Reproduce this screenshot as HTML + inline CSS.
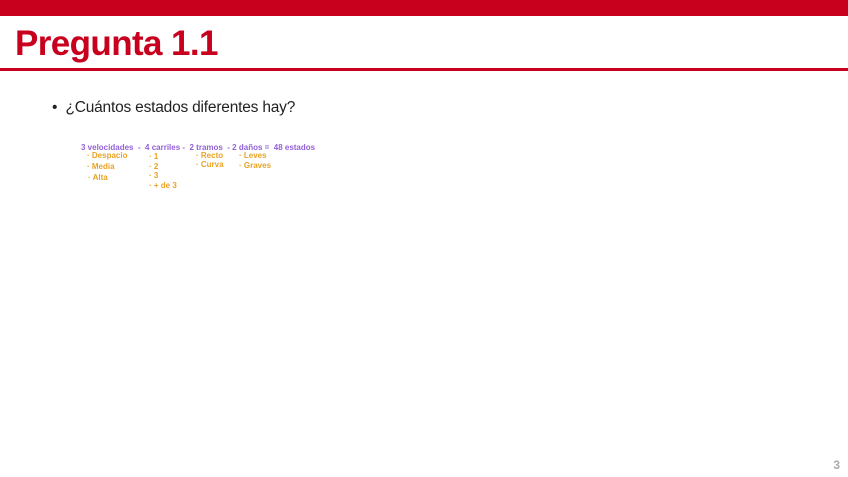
<!DOCTYPE html>
<html><head><style>
body{margin:0;width:848px;height:477px;background:#fff;position:relative;overflow:hidden;font-family:"Liberation Sans",sans-serif}
.bar{position:absolute;left:0;top:0;width:848px;height:16px;background:#c8001e}
.line{position:absolute;left:0;top:68px;width:848px;height:3px;background:#c8001e}
h1{position:absolute;left:15px;top:24px;margin:0;font-size:35px;font-weight:bold;color:#c8001e;letter-spacing:-0.6px}
.b{position:absolute;left:52px;top:99px;font-size:15.5px;color:#222;letter-spacing:-0.2px}
.t{position:absolute;font-size:8px;font-weight:bold;white-space:nowrap}
.p{color:#9361d8}.o{color:#e9a326}
.n{position:absolute;right:8px;top:458px;font-size:12px;font-weight:bold;color:#aaa}
</style></head><body>
<div class="bar"></div>
<h1>Pregunta 1.1</h1>
<div class="line"></div>
<div class="b">•&nbsp;&nbsp;¿Cuántos estados diferentes hay?</div>
<div class="t p" style="left:81px;top:143px">3 velocidades &nbsp;- &nbsp;4 carriles - &nbsp;2 tramos &nbsp;- 2 daños = &nbsp;48 estados</div>
<div class="t o" style="left:87px;top:151px">· Despacio</div>
<div class="t o" style="left:87px;top:162px">· Media</div>
<div class="t o" style="left:88px;top:173px">· Alta</div>
<div class="t o" style="left:149px;top:152px">· 1</div>
<div class="t o" style="left:149px;top:162px">· 2</div>
<div class="t o" style="left:149px;top:171px">· 3</div>
<div class="t o" style="left:149px;top:181px">· + de 3</div>
<div class="t o" style="left:196px;top:151px">· Recto</div>
<div class="t o" style="left:196px;top:160px">· Curva</div>
<div class="t o" style="left:239px;top:151px">· Leves</div>
<div class="t o" style="left:239px;top:161px">· Graves</div>
<div class="n">3</div>
</body></html>
